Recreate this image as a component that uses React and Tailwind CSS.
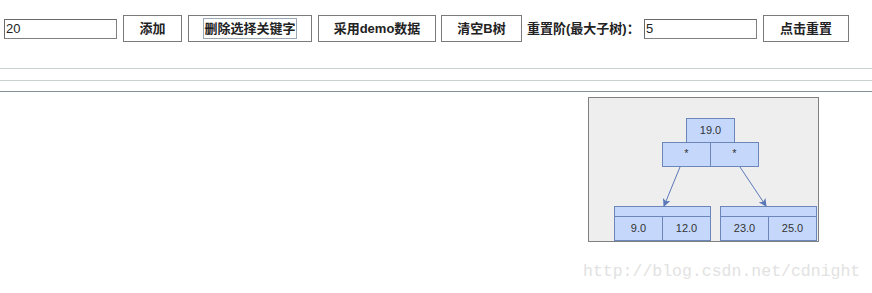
import React from "react";

const font = { fontFamily: '"Liberation Sans", "Noto Sans CJK SC", sans-serif' };

const Button = ({ children, width, focused }) => (
  <button
    className="h-[27px] bg-white border border-[#7a7a7a] text-[13px] font-bold text-[#222] flex items-center justify-center"
    style={{ width }}
  >
    {focused ? (
      <span className="outline outline-1 outline-[#9aa8b8] px-0 leading-[19px]">{children}</span>
    ) : (
      children
    )}
  </button>
);

const Cell = ({ children, className = "" }) => (
  <div
    className={
      "bg-[#c5d8fc] border border-[#6b86b8] text-[11px] text-[#333] flex justify-center " +
      className
    }
  >
    {children}
  </div>
);

const TreeDiagram = () => (
  <div className="relative w-[231px] h-[145px] bg-[#eeeeee] border border-[#808080] box-border ml-[588px] mt-[5px]">
    {/* root */}
    <Cell className="absolute left-[97px] top-[20px] w-[49px] h-[25px] items-center">19.0</Cell>
    <div className="absolute left-[73px] top-[44px] flex">
      <Cell className="w-[49px] h-[25px] pt-[2px]">*</Cell>
      <Cell className="w-[49px] h-[25px] pt-[2px] -ml-px">*</Cell>
    </div>

    {/* leaves */}
    {[
      { left: "left-[25px]", keys: ["9.0", "12.0"] },
      { left: "left-[131px]", keys: ["23.0", "25.0"] },
    ].map((leaf) => (
      <div key={leaf.keys[0]} className={"absolute top-[108px] w-[97px] " + leaf.left}>
        <Cell className="w-[97px] h-[11px]" />
        <div className="flex -mt-px">
          <Cell className="w-[49px] h-[25px] items-center">{leaf.keys[0]}</Cell>
          <Cell className="w-[49px] h-[25px] items-center -ml-px">{leaf.keys[1]}</Cell>
        </div>
      </div>
    ))}

    {/* arrows */}
    <svg className="absolute left-0 top-0" width="229" height="143">
      <defs>
        <marker id="ah" markerWidth="8" markerHeight="8" refX="7" refY="4" orient="auto" markerUnits="userSpaceOnUse">
          <path d="M0,0 L8,4 L0,8 L2,4 Z" fill="#5a78b8" />
        </marker>
      </defs>
      <line x1="91" y1="69" x2="75" y2="108" stroke="#5a78b8" strokeWidth="1" markerEnd="url(#ah)" />
      <line x1="151" y1="69" x2="177" y2="108" stroke="#5a78b8" strokeWidth="1" markerEnd="url(#ah)" />
    </svg>
  </div>
);

const App = () => {
  return (
    <div className="relative w-[872px] h-[293px] bg-white overflow-hidden" style={font}>
      <div className="flex items-center pt-[15px] pl-[4px]">
        <input
          defaultValue="20"
          className="w-[113px] h-[20px] border border-[#808080] border-t-[#6a6a6a] border-l-[#6a6a6a] px-[1px] text-[13px] text-[#222] outline-none"
          style={font}
        />
        <div className="ml-[6px]">
          <Button width={59}>添加</Button>
        </div>
        <div className="ml-[6px]">
          <Button width={124} focused>
            删除选择关键字
          </Button>
        </div>
        <div className="ml-[6px]">
          <Button width={118}>采用demo数据</Button>
        </div>
        <div className="ml-[5px]">
          <Button width={81}>清空B树</Button>
        </div>
        <span className="ml-[5px] w-[117px] text-[13px] font-bold text-[#222] whitespace-nowrap">
          重置阶(最大子树)：
        </span>
        <input
          defaultValue="5"
          className="w-[113px] h-[20px] border border-[#808080] border-t-[#6a6a6a] border-l-[#6a6a6a] px-[1px] text-[13px] text-[#222] outline-none"
          style={font}
        />
        <div className="ml-[6px]">
          <Button width={86}>点击重置</Button>
        </div>
      </div>

      <div className="mt-[26px] h-px bg-[#c9d1d3]" />
      <div className="mt-[11px] h-px bg-[#c9d1d3]" />
      <div className="mt-[10px] h-px bg-[#84929a]" />

      <TreeDiagram />

      <div
        className="absolute left-[583px] top-[260px] text-[16.5px] text-[#e2e2e2] whitespace-nowrap"
        style={{ fontFamily: '"Liberation Mono", monospace' }}
      >
        http://blog.csdn.net/cdnight
      </div>
    </div>
  );
};

export default App;
